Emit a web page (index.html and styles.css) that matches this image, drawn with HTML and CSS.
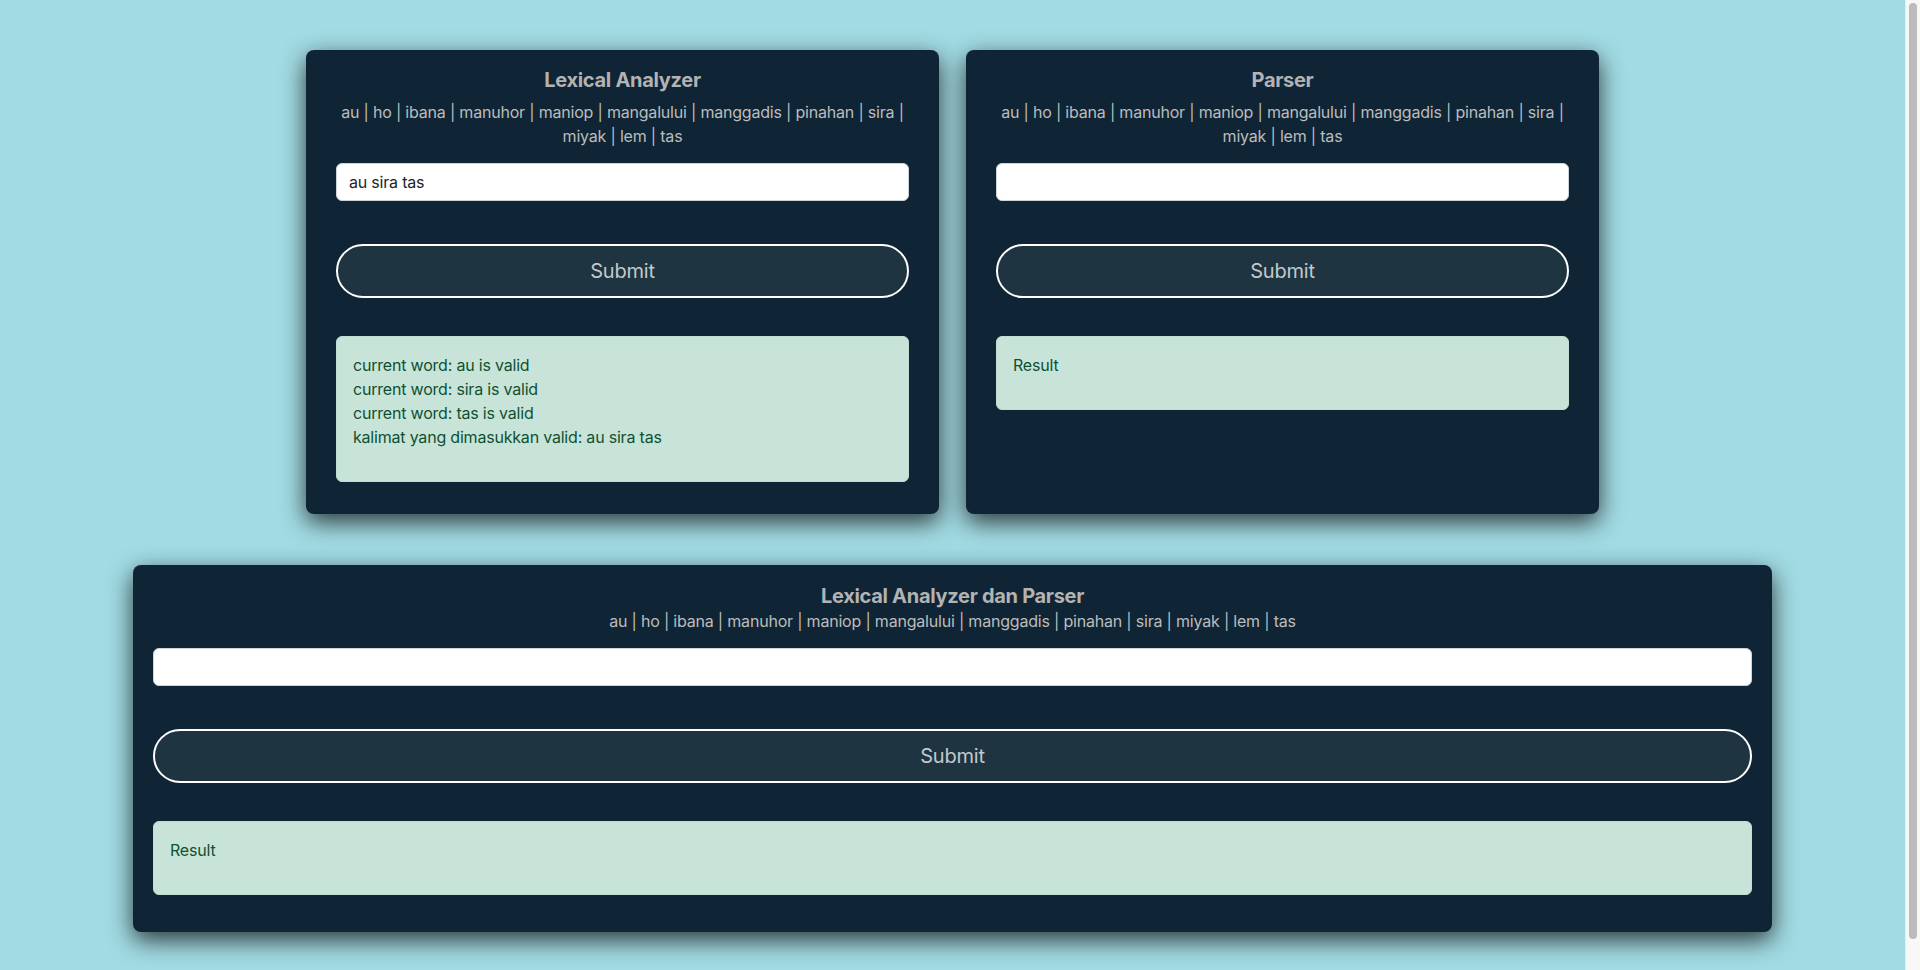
FILE: index.html
```html
<!DOCTYPE html>
<html lang="id">
<head>
<meta charset="utf-8">
<title>Lexical Analyzer dan Parser</title>
<link rel="stylesheet" href="styles.css">
</head>
<body>
<main class="page">
  <div class="row">
    <section class="card card-half">
      <h5 class="card-title">Lexical Analyzer</h5>
      <p class="words">au | ho | ibana | manuhor | maniop | mangalului | manggadis | pinahan | sira | miyak | lem | tas</p>
      <input class="field" type="text" value="au sira tas">
      <button class="submit" type="button">Submit</button>
      <div class="result">
        <p>current word: au is valid<br>current word: sira is valid<br>current word: tas is valid<br>kalimat yang dimasukkan valid: au sira tas</p>
      </div>
    </section>
    <section class="card card-half">
      <h5 class="card-title">Parser</h5>
      <p class="words">au | ho | ibana | manuhor | maniop | mangalului | manggadis | pinahan | sira | miyak | lem | tas</p>
      <input class="field" type="text" value="">
      <button class="submit" type="button">Submit</button>
      <div class="result">
        <p>Result</p>
      </div>
    </section>
  </div>
  <section class="card card-wide">
    <h5 class="card-title tight">Lexical Analyzer dan Parser</h5>
    <p class="words">au | ho | ibana | manuhor | maniop | mangalului | manggadis | pinahan | sira | miyak | lem | tas</p>
    <input class="field" type="text" value="">
    <button class="submit" type="button">Submit</button>
    <div class="result">
      <p>Result</p>
    </div>
  </section>
</main>
<div class="scrollbar" aria-hidden="true"><div class="scrollbar-thumb"></div></div>
</body>
</html>
```
FILE: styles.css
```css
* { box-sizing: border-box; }

html, body {
  margin: 0;
  padding: 0;
}

body {
  background: #a2dbe3;
  font-family: Inter, "Noto Sans", "Liberation Sans", sans-serif;
  font-size: 16px;
  line-height: 24px;
  letter-spacing: -0.2px;
}

.page {
  display: flex;
  flex-direction: column;
  align-items: center;
  gap: 51px;
  padding: 50px 15px 54px 0;
}

.row {
  display: flex;
  gap: 27px;
}

.card {
  background: #0f2535;
  border-radius: 8px;
  box-shadow: 0 8px 24px rgba(0, 0, 0, 0.75);
  display: flex;
  flex-direction: column;
  text-align: center;
}

.card-half {
  width: 633px;
  padding: 18px 30px 16px;
}

.card-wide {
  width: 1639px;
  padding: 19px 20px 21px;
}

.card-title {
  margin: 0 0 8px;
  font-size: 20px;
  line-height: 24px;
  font-weight: 700;
  color: #b3b3b3;
  letter-spacing: -0.3px;
}

.card-title.tight {
  margin-bottom: 1px;
}

.words {
  margin: 0 0 15px;
  color: #bcbcbc;
  font-size: 16px;
  line-height: 24px;
}

.field {
  display: block;
  width: 100%;
  height: 38px;
  padding: 6px 12px;
  font-family: inherit;
  font-size: 16px;
  line-height: 24px;
  letter-spacing: -0.2px;
  color: #212529;
  background: #ffffff;
  border: 1px solid #ced4da;
  border-radius: 6px;
  outline: none;
}

.submit {
  display: block;
  width: 100%;
  height: 54px;
  margin-top: 43px;
  background: #1e3441;
  border: 2px solid #ffffff;
  border-radius: 30px;
  color: #c3c9cc;
  font-family: inherit;
  font-size: 20px;
  letter-spacing: -0.2px;
  cursor: pointer;
}

.result {
  margin-top: 38px;
  margin-bottom: 16px;
  padding: 16px;
  background: #c8e4d9;
  border: 1px solid #c0dfd2;
  border-radius: 6px;
  color: #0f5132;
  text-align: left;
}

.result p {
  margin: 0 0 16px;
}

/* browser scrollbar strip visible in the capture */
.scrollbar {
  position: fixed;
  top: 0;
  right: 0;
  bottom: 0;
  width: 15px;
  background: #f8f8f8;
  border-left: 1px solid #ececec;
}

.scrollbar-thumb {
  position: absolute;
  top: 3px;
  left: 3px;
  width: 8px;
  height: 936px;
  border-radius: 4px;
  background: #bbbbbb;
}
```
